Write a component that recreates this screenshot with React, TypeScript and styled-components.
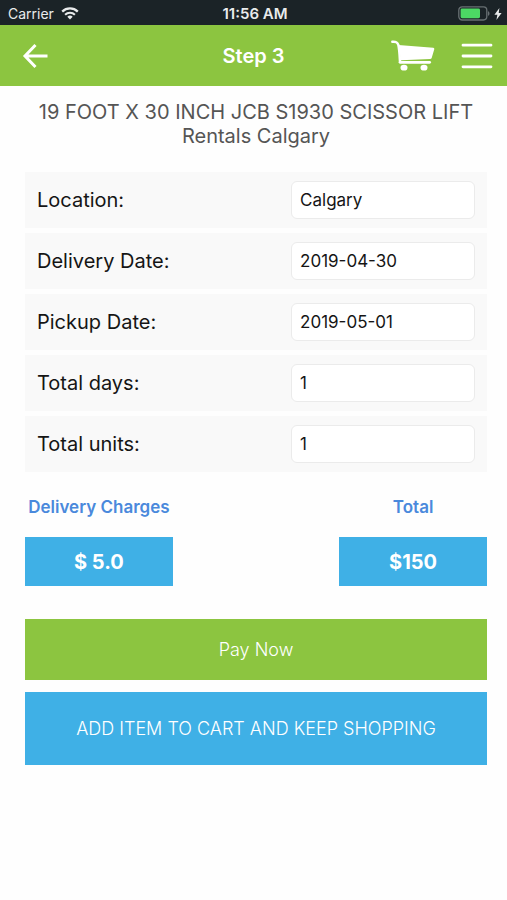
import React from "react";
import styled, { createGlobalStyle } from "styled-components";

const GlobalStyle = createGlobalStyle`
  * { box-sizing: border-box; }
  body {
    margin: 0;
    background: #fefefe;
    color: #151515;
    font-family: Inter, "Liberation Sans", sans-serif;
  }
  button, input { font-family: inherit; }
`;

const GREEN = "#8cc540";
const BLUE = "#3fb0e6";

const StatusBar = styled.div`
  display: grid;
  grid-template-columns: 1fr auto 1fr;
  align-items: center;
  height: 25px;
  padding: 2px 5px 0 8px;
  background: #1b2327;
  color: #e9ebec;
  font-size: 14px;
  line-height: 20px;
`;

const StatusGroup = styled.div<{ $end?: boolean }>`
  display: flex;
  align-items: center;
  justify-content: ${(p) => (p.$end ? "flex-end" : "flex-start")};
  gap: ${(p) => (p.$end ? 4 : 7)}px;
`;

const Clock = styled.time`
  font-size: 15px;
  font-weight: 600;
`;

const Header = styled.header`
  display: grid;
  grid-template-columns: 1fr auto 1fr;
  align-items: center;
  height: 61px;
  padding: 0 14px;
  background: ${GREEN};
  color: #fff;
`;

const HeaderTitle = styled.h1`
  margin: 0;
  font-size: 20px;
  line-height: 24px;
  font-weight: 600;
`;

const HeaderActions = styled.div`
  display: flex;
  align-items: center;
  justify-content: flex-end;
  gap: 26px;
`;

const IconButton = styled.button`
  display: flex;
  justify-self: start;
  padding: 0;
  border: 0;
  background: none;
  color: inherit;
  cursor: pointer;
`;

const BackButton = styled(IconButton)`
  padding: 0 8px;
`;

const Content = styled.main`
  padding: 14px 20px 24px 25px;
`;

const ProductName = styled.h2`
  margin: 0 0 24px;
  color: #555;
  font-size: 20px;
  line-height: 24px;
  font-weight: 400;
  text-align: center;
`;

const Form = styled.form`
  display: flex;
  flex-direction: column;
`;

const Rows = styled.div`
  display: flex;
  flex-direction: column;
  gap: 5px;
`;

const Row = styled.div`
  display: flex;
  align-items: center;
  justify-content: space-between;
  height: 56px;
  padding: 0 12px;
  background: #f9f9f9;
`;

const Label = styled.label`
  font-size: 20px;
  line-height: 24px;
`;

const Field = styled.input`
  width: 42%;
  height: 38px;
  padding: 0 8px;
  border: 1px solid #ebebeb;
  border-radius: 6px;
  background: #fff;
  color: #151515;
  font-size: 17px;
`;

const Charges = styled.div`
  display: flex;
  justify-content: space-between;
  margin-top: 25px;
`;

const Charge = styled.div`
  display: flex;
  flex-direction: column;
  align-items: center;
  gap: 20px;
  width: 32%;
`;

const ChargeLabel = styled.span`
  color: #4a89dc;
  font-size: 17px;
  line-height: 20px;
  font-weight: 600;
  white-space: nowrap;
`;

const Amount = styled.output`
  display: flex;
  align-items: center;
  justify-content: center;
  align-self: stretch;
  height: 49px;
  background: ${BLUE};
  color: #fff;
  font-size: 20px;
  line-height: 24px;
  font-weight: 700;
`;

const Actions = styled.div`
  display: flex;
  flex-direction: column;
  gap: 12px;
  margin-top: 33px;
`;

const ActionButton = styled.button<{ $primary?: boolean }>`
  height: ${(p) => (p.$primary ? 61 : 73)}px;
  padding: 0 12px;
  border: 0;
  background: ${(p) => (p.$primary ? GREEN : BLUE)};
  color: #fff;
  font-size: 18px;
  line-height: 24px;
  font-weight: 300;
  cursor: pointer;
`;

const WifiIcon = () => (
  <svg width="18" height="13" viewBox="0 0 18 13" fill="none" stroke="currentColor" aria-hidden="true">
    <path d="M1.2 4.6a11.2 11.2 0 0 1 15.6 0" strokeWidth="2.3" />
    <path d="M4.1 7.7a7 7 0 0 1 9.8 0" strokeWidth="2.1" />
    <path d="M9 12.6 6.3 9.8a3.9 3.9 0 0 1 5.4 0Z" fill="currentColor" stroke="none" />
  </svg>
);

const BatteryIcon = () => (
  <svg width="32" height="15" viewBox="0 0 32 15" aria-hidden="true">
    <rect x="0.8" y="0.8" width="28" height="13.2" rx="3.4" fill="none" stroke="#687073" strokeWidth="1.3" />
    <rect x="2.6" y="2.6" width="19.4" height="9.6" rx="1.4" fill="#4cd964" />
    <path d="M30 5.2c2 .6 2 4 0 4.6Z" fill="#687073" />
  </svg>
);

const BoltIcon = () => (
  <svg width="8" height="12" viewBox="0 0 8 12" fill="currentColor" aria-hidden="true">
    <path d="M5.4 0 .4 6.8h3L2.4 12l5.2-7H4.7Z" />
  </svg>
);

const BackIcon = () => (
  <svg width="26" height="26" viewBox="0 0 26 26" fill="none" stroke="currentColor" strokeWidth="3" aria-hidden="true">
    <path d="M13.5 2 3 13l10.5 11M3 13h22.5" />
  </svg>
);

const CartIcon = () => (
  <svg width="44" height="31" viewBox="32 34 132 93" fill="currentColor" aria-hidden="true">
    <path
      d="M36 39.5c11-1 15 1 18 9 3 11 4 32 5 50"
      fill="none"
      stroke="currentColor"
      strokeWidth="7.5"
      strokeLinecap="round"
    />
    <path d="M54 49 159 57q3 .5 3 4l-8 27q-1 3-5 3L62 95Z" />
    <rect x="55" y="97" width="97" height="8" rx="4" />
    <ellipse cx="71" cy="117" rx="10.5" ry="8.5" />
    <ellipse cx="131" cy="117" rx="10.5" ry="8.5" />
  </svg>
);

const MenuIcon = () => (
  <svg width="32" height="26" viewBox="0 0 32 26" stroke="currentColor" strokeWidth="2.8" strokeLinecap="round" aria-hidden="true">
    <path d="M2 2.2h28M2 13h28M2 23.8h28" />
  </svg>
);

const fields = [
  { id: "location", label: "Location:", value: "Calgary" },
  { id: "delivery-date", label: "Delivery Date:", value: "2019-04-30" },
  { id: "pickup-date", label: "Pickup Date:", value: "2019-05-01" },
  { id: "total-days", label: "Total days:", value: "1" },
  { id: "total-units", label: "Total units:", value: "1" },
];

export default function App() {
  return (
    <>
      <GlobalStyle />
      <StatusBar>
        <StatusGroup>
          <span>Carrier</span>
          <WifiIcon />
        </StatusGroup>
        <Clock>11:56 AM</Clock>
        <StatusGroup $end>
          <BatteryIcon />
          <BoltIcon />
        </StatusGroup>
      </StatusBar>
      <Header>
        <BackButton type="button" aria-label="Back">
          <BackIcon />
        </BackButton>
        <HeaderTitle>Step 3</HeaderTitle>
        <HeaderActions>
          <IconButton type="button" aria-label="Cart">
            <CartIcon />
          </IconButton>
          <IconButton type="button" aria-label="Menu">
            <MenuIcon />
          </IconButton>
        </HeaderActions>
      </Header>
      <Content>
        <ProductName>19 FOOT X 30 INCH JCB S1930 SCISSOR LIFT Rentals Calgary</ProductName>
        <Form onSubmit={(e) => e.preventDefault()}>
          <Rows>
            {fields.map((f) => (
              <Row key={f.id}>
                <Label htmlFor={f.id}>{f.label}</Label>
                <Field id={f.id} type="text" defaultValue={f.value} />
              </Row>
            ))}
          </Rows>
          <Charges>
            <Charge>
              <ChargeLabel id="delivery-charges">Delivery Charges</ChargeLabel>
              <Amount aria-labelledby="delivery-charges">$ 5.0</Amount>
            </Charge>
            <Charge>
              <ChargeLabel id="total">Total</ChargeLabel>
              <Amount aria-labelledby="total">$150</Amount>
            </Charge>
          </Charges>
          <Actions>
            <ActionButton type="submit" $primary>
              Pay Now
            </ActionButton>
            <ActionButton type="button">ADD ITEM TO CART AND KEEP SHOPPING</ActionButton>
          </Actions>
        </Form>
      </Content>
    </>
  );
}
